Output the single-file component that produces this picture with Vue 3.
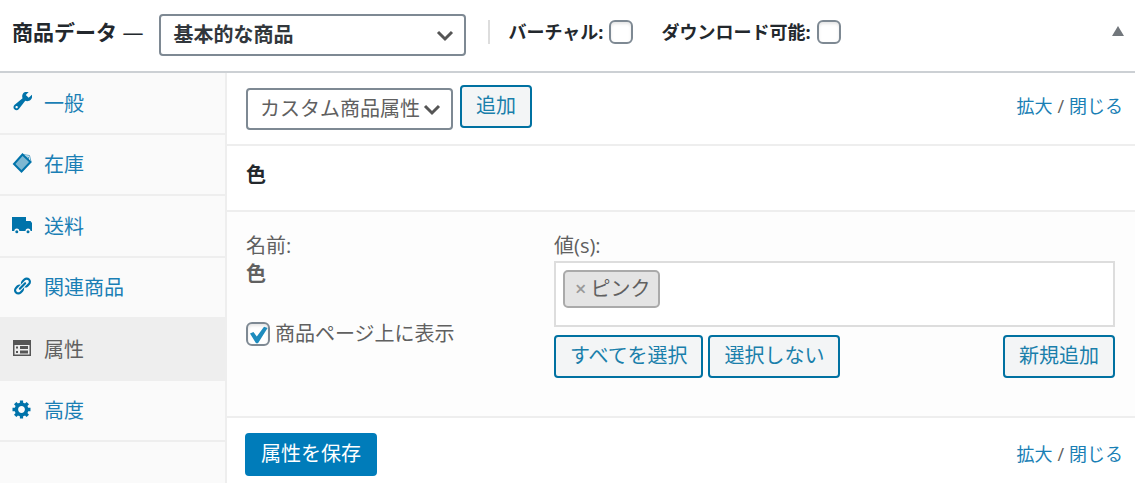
<script setup>
import { ref } from 'vue'

const tabs = [
  { id: 'general', label: '一般' },
  { id: 'inventory', label: '在庫' },
  { id: 'shipping', label: '送料' },
  { id: 'linked', label: '関連商品' },
  { id: 'attributes', label: '属性' },
  { id: 'advanced', label: '高度' }
]
const active = ref('attributes')
const virtual = ref(false)
const downloadable = ref(false)
const visible = ref(true)
</script>

<template>
  <section class="box">
    <header class="head">
      <h2 class="title">商品データ <span class="dash">—</span></h2>
      <div class="select type">
        <select aria-label="商品タイプ">
          <option>基本的な商品</option>
        </select>
        <svg class="chevron" viewBox="0 0 18 12" aria-hidden="true"><path d="M2 2l7 7 7-7" /></svg>
      </div>
      <div class="flags">
        <label class="flag">バーチャル:<input v-model="virtual" type="checkbox" class="check" /></label>
        <label class="flag">ダウンロード可能:<input v-model="downloadable" type="checkbox" class="check" /></label>
      </div>
      <button class="toggle" type="button" aria-label="パネルを切り替え">
        <svg viewBox="0 0 12 10" aria-hidden="true"><path d="M6 0l6 10H0z" /></svg>
      </button>
    </header>

    <div class="body">
      <nav class="side">
        <ul class="tabs">
          <li v-for="tab in tabs" :key="tab.id">
            <a href="#" class="tab" :class="{ active: active === tab.id }" @click.prevent="active = tab.id">
              <svg class="icon" viewBox="0 0 20 20" aria-hidden="true">
                <path v-if="tab.id === 'general'" d="M18.68 7.77c-1.500 1.500-3.600 1.800-5.400 1.100l-6.600 8.400c-1.200 1.200-3.100 1.200-4.300 0s-1.200-3.100 0-4.200l8.200-6.700c-.75-1.800-.4-4 1.100-5.500 1.400-1.400 3.500-1.800 5.200-1.100l-3.100 3.200 2.900 2.900 3.200-3.100c.6 1.700.2 3.600-1.200 5zM3.800 16c.45.45 1.200.45 1.650 0 .45-.45.45-1.200 0-1.650-.45-.45-1.200-.45-1.650 0-.45.45-.45 1.200 0 1.650z" />
                <g v-else-if="tab.id === 'inventory'" class="line">
                  <path class="tint" d="M10.500 1.500L2 11l8 8 8.500-9.500z" />
                  <path d="M10.500 1.500L2 11l7.500 7.500 9-9.500z" />
                  <path class="thin" d="M11 1.500l6.500 1 1.500 6M14 4h2.500v3" />
                </g>
                <g v-else-if="tab.id === 'shipping'">
                  <path d="M0 2h14v4h4.500L20 8v8h-1.500a2.500 2.500 0 0 0-5 0H7.300a2.500 2.500 0 0 0-5 0H0z" />
                  <circle cx="4.800" cy="16.700" r="1.500" /><circle cx="16" cy="16.700" r="1.500" />
                </g>
                <path v-else-if="tab.id === 'linked'" d="M17.740 2.760c1.680 1.690 1.680 4.410 0 6.100l-1.530 1.520c-1.120 1.120-2.700 1.470-4.140 1.090l2.620-2.610.76-.77.76-.76c.84-.84.84-2.200 0-3.040-.84-.85-2.200-.85-3.040 0l-.77.76-3.380 3.380c-.37-1.440-.02-3.020 1.100-4.140l1.520-1.530c1.690-1.680 4.420-1.680 6.100 0zM8.590 13.430l5.340-5.340c.42-.42.42-1.100 0-1.520-.44-.43-1.130-.39-1.530 0l-5.330 5.340c-.42.42-.42 1.100 0 1.520.44.43 1.130.39 1.520 0zm-.76 2.290l4.140-4.150c.38 1.440.03 3.020-1.090 4.140l-1.520 1.530c-1.690 1.680-4.410 1.680-6.100 0-1.680-1.680-1.680-4.420 0-6.100l1.530-1.520c1.120-1.120 2.700-1.470 4.140-1.100l-4.140 4.150c-.85.84-.85 2.200 0 3.050.84.84 2.200.84 3.040 0z" />
                <path v-else-if="tab.id === 'attributes'" fill-rule="evenodd" d="M1 2h18v16H1zM2.500 7v9.500h15V7zM4 8.500h2v2H4zM8 8h8v3H8zM4 13h2v2H4zM8 12.500h8v3H8z" />
                <path v-else d="M18.500 12.200h-2.300c-.2.700-.4 1.300-.8 1.900l1.600 1.600-2.400 2.400-1.600-1.600c-.6.400-1.200.6-1.900.8v2.200H7.900v-2.200c-.7-.2-1.300-.4-1.900-.8l-1.600 1.600L2 15.700l1.600-1.600c-.4-.6-.6-1.200-.8-1.900H.5V8.800h2.300c.2-.7.4-1.300.8-1.900L2 5.300l2.400-2.400L6 4.500c.6-.4 1.200-.6 1.900-.8V1.500h3.200v2.200c.7.2 1.300.4 1.900.8l1.600-1.600L17 5.300l-1.600 1.600c.4.600.6 1.200.8 1.900h2.300zm-9 1.700c1.900 0 3.400-1.500 3.400-3.400s-1.500-3.400-3.400-3.400-3.400 1.500-3.400 3.400 1.500 3.400 3.400 3.400z" />
              </svg>
              <span>{{ tab.label }}</span>
            </a>
          </li>
        </ul>
      </nav>

      <div class="panel">
        <div class="bar top">
          <div class="select attr">
            <select aria-label="商品属性">
              <option>カスタム商品属性</option>
            </select>
            <svg class="chevron" viewBox="0 0 18 12" aria-hidden="true"><path d="M2 2l7 7 7-7" /></svg>
          </div>
          <button type="button" class="btn">追加</button>
          <span class="links"><a href="#">拡大</a><span>/</span><a href="#">閉じる</a></span>
        </div>

        <h3 class="name">色</h3>

        <div class="fields">
          <div class="left">
            <div>名前:</div>
            <strong>色</strong>
            <label class="show"><input v-model="visible" type="checkbox" class="check" />商品ページ上に表示</label>
          </div>
          <div class="right">
            <label for="values">値(s):</label>
            <div class="values">
              <span class="tag"><button type="button" class="remove" aria-label="削除">×</button>ピンク</span>
              <input id="values" type="text" class="entry" />
            </div>
            <div class="actions">
              <button type="button" class="btn">すべてを選択</button>
              <button type="button" class="btn">選択しない</button>
              <button type="button" class="btn new">新規追加</button>
            </div>
          </div>
        </div>

        <div class="bar bottom">
          <button type="button" class="btn primary">属性を保存</button>
          <span class="links"><a href="#">拡大</a><span>/</span><a href="#">閉じる</a></span>
        </div>
      </div>
    </div>
  </section>
</template>

<style>
body {
  margin: 0;
  background: #fff;
}
</style>

<style scoped>
.box,
.box * {
  box-sizing: border-box;
}
.box {
  display: flex;
  flex-direction: column;
  min-height: 100vh;
  color: #606060;
  font-family: "Open Sans", "Noto Sans CJK JP", sans-serif;
  font-size: 20px;
  line-height: 28px;
}
button,
select,
input {
  font: inherit;
  margin: 0;
}
a {
  color: #1a7fb5;
  text-decoration: none;
}
.head {
  display: flex;
  align-items: center;
  height: 73px;
  padding: 0 10px 2px 12px;
  border-bottom: 2px solid #ccd0d4;
  color: #23282d;
}
.title {
  margin: 0;
  padding-bottom: 6px;
  font-size: 21px;
  font-weight: 700;
  white-space: nowrap;
}
.dash {
  font-weight: 400;
}
.select {
  position: relative;
  flex: none;
}
.select select {
  width: 100%;
  height: 42px;
  padding: 0 36px 0 12px;
  border: 2px solid #7e8993;
  border-radius: 4px;
  background: #fff;
  color: #606060;
  line-height: 28px;
  appearance: none;
}
.type {
  width: 307px;
  margin-left: 16px;
}
.type select {
  color: #32373c;
  font-weight: 700;
}
.chevron {
  position: absolute;
  right: 12px;
  top: 16px;
  width: 18px;
  height: 12px;
  fill: none;
  stroke: #555;
  stroke-width: 3;
  pointer-events: none;
}
.flags {
  display: flex;
  align-items: center;
  gap: 28px;
  height: 24px;
  margin: 0 0 6px 22px;
  padding-left: 18px;
  border-left: 2px solid #ddd;
}
.flag {
  display: flex;
  align-items: center;
  gap: 6px;
  font-size: 18px;
  font-weight: 700;
  white-space: nowrap;
}
.check {
  flex: none;
  width: 24px;
  height: 24px;
  border: 2px solid #7e8993;
  border-radius: 6px;
  background: #fff;
  box-shadow: inset 0 2px 3px #0000001a;
  appearance: none;
}
.check:checked::before {
  content: "";
  display: block;
  width: 20px;
  height: 20px;
  background: #1e8cbe;
  clip-path: polygon(10% 48%, 27% 40%, 44% 62%, 80% 14%, 98% 20%, 50% 96%, 40% 96%);
}
.toggle {
  display: flex;
  margin: 0 0 8px auto;
  padding: 0 1px;
  border: 0;
  background: none;
}
.toggle svg {
  width: 12px;
  height: 10px;
  fill: #72777c;
}
.body {
  display: flex;
  flex: 1;
}
.side {
  flex: none;
  width: 227px;
  border-right: 2px solid #eee;
  background: #fafafa;
}
.tabs {
  display: grid;
  grid-template-rows: repeat(6, 1fr);
  height: 369px;
  margin: 0;
  padding: 0;
  list-style: none;
}
.tab {
  display: flex;
  align-items: center;
  gap: 12px;
  height: 100%;
  padding: 2px 12px 0;
  border-bottom: 2px solid #eee;
}
.active {
  background: #eee;
  color: #606060;
}
.icon {
  flex: none;
  width: 20px;
  height: 20px;
  margin-bottom: 4px;
  fill: #0073aa;
  stroke: none;
}
.active .icon {
  fill: #555;
}
.icon .line {
  fill: none;
  stroke: #0073aa;
  stroke-width: 2;
}
.line .tint {
  fill: #0073aa;
  fill-opacity: 0.5;
  stroke: none;
}
.line .thin {
  stroke-opacity: 0.6;
  stroke-width: 1;
}
.panel {
  display: flex;
  flex: 1;
  flex-direction: column;
  min-width: 0;
}
.bar {
  display: flex;
  padding: 12px 12px 0 18px;
}
.top {
  height: 73px;
  border-bottom: 2px solid #eee;
}
.attr {
  width: 207px;
  margin: 3px 7px 0 1px;
}
.attr select {
  padding-right: 30px;
}
.btn {
  height: 43px;
  padding: 0 14px 2px;
  border: 2px solid #0071a1;
  border-radius: 4px;
  background: #f3f5f6;
  color: #1a7fab;
  white-space: nowrap;
}
.links {
  display: flex;
  gap: 5px;
  margin: 7px 0 0 auto;
  font-size: 18px;
}
.name {
  height: 66px;
  margin: 0;
  padding: 15px 19px 0;
  border-bottom: 2px solid #eee;
  color: #23282d;
  font-size: 20px;
  font-weight: 700;
}
.fields {
  display: flex;
  gap: 20px;
  padding: 20px 20px 38px 19px;
  border-bottom: 2px solid #eee;
  background: #fdfdfd;
}
.left {
  flex: 1 1 0;
}
.left strong {
  display: block;
}
.show {
  display: flex;
  align-items: center;
  gap: 5px;
  margin-top: 32px;
  white-space: nowrap;
}
.right {
  flex: 2 1 0;
  max-width: 561px;
}
.right > label {
  display: block;
}
.values {
  display: flex;
  align-items: flex-start;
  gap: 8px;
  height: 66px;
  margin-top: 1px;
  padding: 7px;
  border: 2px solid #ddd;
  background: #fff;
}
.tag {
  display: flex;
  align-items: center;
  height: 38px;
  padding: 0 8px 0 10px;
  border: 2px solid #aaa;
  border-radius: 5px;
  background: #e4e4e4;
  white-space: nowrap;
}
.remove {
  padding: 0 4px 0 0;
  border: 0;
  background: none;
  color: #999;
  font-weight: 600;
}
.entry {
  flex: 1;
  min-width: 0;
  height: 38px;
  border: 0;
  outline: 0;
  background: none;
}
.actions {
  display: flex;
  gap: 5px;
  margin-top: 8px;
}
.new {
  margin-left: auto;
}
.bottom {
  padding-top: 15px;
  padding-bottom: 8px;
}
.primary {
  border-color: #007cba;
  background: #007cba;
  color: #fff;
}
</style>
